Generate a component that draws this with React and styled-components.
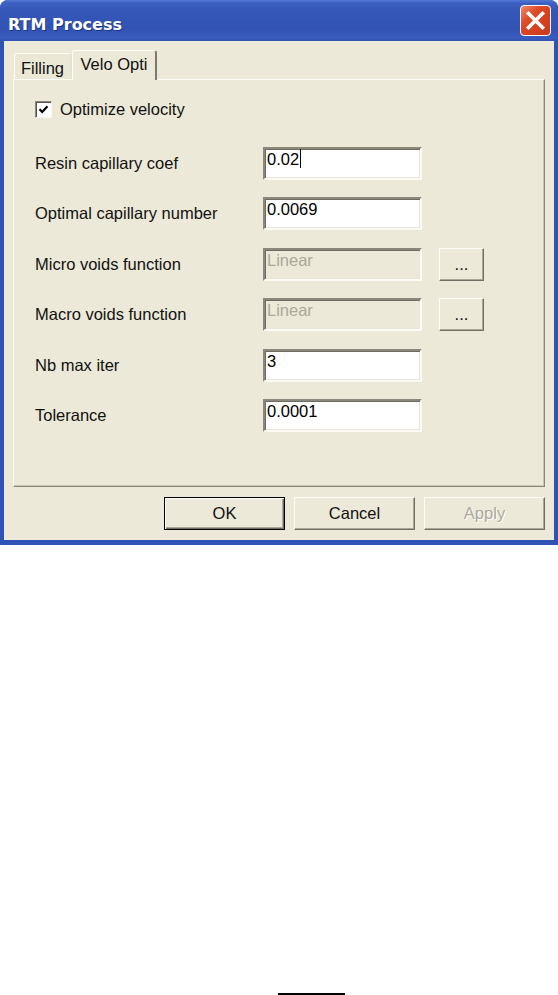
import React from "react";
import styled, { createGlobalStyle } from "styled-components";

const GlobalStyle = createGlobalStyle`
  body {
    margin: 0;
    background: #fff;
    font-family: "Liberation Sans", Arial, sans-serif;
  }
`;

const Window = styled.div`
  width: 558px;
  background: #2f53b5;
  border-radius: 8px 8px 0 0;
  display: flex;
  flex-direction: column;
`;

const TitleBar = styled.div`
  height: 41px;
  display: flex;
  align-items: center;
  justify-content: space-between;
  padding: 0 7px 0 8px;
  border-radius: 8px 8px 0 0;
  background: linear-gradient(
    #5378d4 0px,
    #3d61c2 3px,
    #3457b8 10px,
    #3253b4 30px,
    #3a5cbd 38px,
    #2f51b1 41px
  );
`;

const Title = styled.div`
  margin-top: 7px;
  color: #fff;
  font-family: "DejaVu Sans", sans-serif;
  font-weight: bold;
  font-size: 16px;
  text-shadow: 1px 1px 0 #1c3580;
`;

const CloseButton = styled.div`
  width: 29px;
  height: 29px;
  border: 1px solid #fff;
  border-radius: 4px;
  background: linear-gradient(135deg, #ee8a6c 0%, #dd4a26 35%, #c9381a 100%);
  display: flex;
  align-items: center;
  justify-content: center;
`;

const Body = styled.div`
  margin: 0 4px 5px 4px;
  background: #ece9d8;
  padding: 9px 9px 10px 9px;
`;

const TabRow = styled.div`
  display: flex;
  align-items: flex-end;
  height: 29px;
  padding-left: 1px;
`;

const Tab = styled.div`
  position: relative;
  z-index: ${(p) => (p.$active ? 1 : 0)};
  width: ${(p) => p.$width}px;
  height: ${(p) => (p.$active ? 30 : 26)}px;
  margin-bottom: ${(p) => (p.$active ? -1 : 0)}px;
  box-sizing: border-box;
  background: ${(p) => (p.$active ? "#ece9d8" : "#ebe8d6")};
  border-top: 1px solid #fdfdf8;
  border-left: 1px solid #fdfdf8;
  border-right: 2px solid ${(p) => (p.$active ? "#7d7b6f" : "#e6e3d3")};
  border-radius: 3px 3px 0 0;
  font-size: 16.5px;
  color: #111;
  padding-top: ${(p) => (p.$active ? 4 : 5)}px;
  text-align: center;
`;

const Panel = styled.div`
  width: 532px;
  height: 408px;
  box-sizing: border-box;
  border: 1px solid;
  border-color: #fdfdf8 #8a887c #8a887c #fdfdf8;
  box-shadow: inset -1px -1px 0 #c9c6b6;
  padding: 21px 0 0 21px;
`;

const CheckRow = styled.div`
  display: flex;
  align-items: center;
  gap: 8px;
  height: 17px;
  font-size: 16.5px;
  color: #111;
`;

const CheckBox = styled.div`
  width: 17px;
  height: 17px;
  box-sizing: border-box;
  border: 1px solid;
  border-color: #8a887c #f8f7f0 #f8f7f0 #8a887c;
  box-shadow: inset 1px 1px 0 #55534a;
  background: #fff;
  display: flex;
  align-items: center;
  justify-content: center;
`;

const Form = styled.div`
  margin-top: 29px;
  display: grid;
  grid-template-columns: 211px 159px 45px;
  grid-auto-rows: 33px;
  column-gap: 17px;
  row-gap: 17.4px;
`;

const Label = styled.div`
  grid-column: 1;
  align-self: center;
  font-size: 16.5px;
  color: #111;
  white-space: nowrap;
`;

const Field = styled.div`
  grid-column: 2;
  box-sizing: border-box;
  height: 33px;
  border: 2px solid;
  border-color: #8a887c #fbfaf3 #fbfaf3 #8a887c;
  box-shadow: inset 1px 1px 0 #6f6d61, inset -1px -1px 0 #e8e6d8;
  background: ${(p) => (p.$disabled ? "#ece9d8" : "#fff")};
  color: ${(p) => (p.$disabled ? "#aca899" : "#000")};
  font-size: 16.5px;
  line-height: 18px;
  padding: 1px 2px;
  display: flex;
  align-items: flex-start;
`;

const Caret = styled.span`
  display: inline-block;
  width: 1px;
  height: 19px;
  margin-left: 1px;
  margin-top: -1px;
  background: #000;
`;

const Button = styled.div`
  box-sizing: border-box;
  width: ${(p) => p.$width}px;
  height: 33px;
  border: 1px solid;
  border-color: ${(p) =>
    p.$default ? "#000" : "#fdfdf8 #716f64 #716f64 #fdfdf8"};
  box-shadow: ${(p) =>
    p.$default
      ? "inset 1px 1px 0 #fdfdf8, inset -1px -1px 0 #716f64, inset -2px -2px 0 #aca899"
      : "inset -1px -1px 0 #aca899"};
  background: #ece9d8;
  display: flex;
  align-items: center;
  justify-content: center;
  font-size: 16.5px;
  color: ${(p) => (p.$disabled ? "#aca899" : "#111")};
  text-shadow: ${(p) => (p.$disabled ? "1px 1px 0 #fff" : "none")};
`;

const DotsButton = styled(Button)`
  grid-column: 3;
`;

const Footer = styled.div`
  display: flex;
  justify-content: flex-end;
  gap: 9px;
  margin-top: 10px;
  width: 532px;
`;

const Stray = styled.div`
  margin: 448px 0 0 278px;
  width: 67px;
  height: 2px;
  background: #000;
`;

const rows = [
  { label: "Resin capillary coef", value: "0.02", caret: true },
  { label: "Optimal capillary number", value: "0.0069" },
  { label: "Micro voids function", value: "Linear", disabled: true },
  { label: "Macro voids function", value: "Linear", disabled: true },
  { label: "Nb max iter", value: "3" },
  { label: "Tolerance", value: "0.0001" },
];

export default function App() {
  return (
    <>
      <GlobalStyle />
      <Window>
        <TitleBar>
          <Title>RTM Process</Title>
          <CloseButton>
            <svg width="21" height="21" viewBox="0 0 21 21">
              <path
                d="M3.5 3.5 L17.5 17.5 M17.5 3.5 L3.5 17.5"
                stroke="#fff"
                strokeWidth="3.6"
                strokeLinecap="square"
              />
            </svg>
          </CloseButton>
        </TitleBar>
        <Body>
          <TabRow>
            <Tab $width={58}>Filling</Tab>
            <Tab $width={85} $active>
              Velo Opti
            </Tab>
          </TabRow>
          <Panel>
            <CheckRow>
              <CheckBox>
                <svg width="11" height="11" viewBox="0 0 11 11">
                  <path
                    d="M1.5 5.2 L4.2 8 L9.5 2.2"
                    fill="none"
                    stroke="#000"
                    strokeWidth="2.2"
                  />
                </svg>
              </CheckBox>
              Optimize velocity
            </CheckRow>
            <Form>
              {rows.map((r) => (
                <React.Fragment key={r.label}>
                  <Label>{r.label}</Label>
                  <Field $disabled={r.disabled}>
                    {r.value}
                    {r.caret && <Caret />}
                  </Field>
                  {r.disabled && <DotsButton $width={45}>...</DotsButton>}
                </React.Fragment>
              ))}
            </Form>
          </Panel>
          <Footer>
            <Button $width={121} $default>
              OK
            </Button>
            <Button $width={121}>Cancel</Button>
            <Button $width={121} $disabled>
              Apply
            </Button>
          </Footer>
        </Body>
      </Window>
      <Stray />
    </>
  );
}
